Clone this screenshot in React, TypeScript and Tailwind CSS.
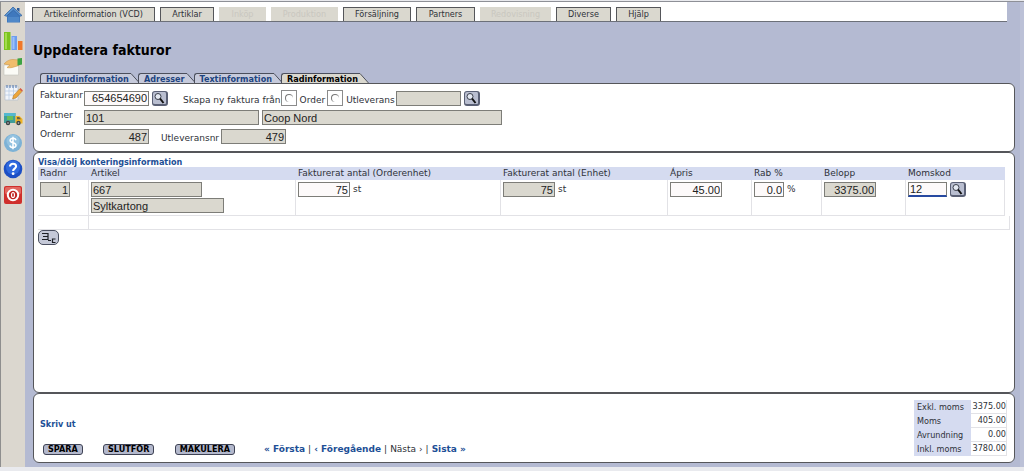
import type { ReactNode } from "react";
import clsx from "clsx";

const menu = [
  { label: "Artikelinformation (VCD)", width: "w-[123px]" },
  { label: "Artiklar", width: "w-[54px]" },
  { label: "Inköp", width: "w-[47px]", disabled: true },
  { label: "Produktion", width: "w-[67px]", disabled: true },
  { label: "Försäljning", width: "w-[68px]" },
  { label: "Partners", width: "w-[59px]" },
  { label: "Redovisning", width: "w-[71px]", disabled: true },
  { label: "Diverse", width: "w-[55px]" },
  { label: "Hjälp", width: "w-[45px]" },
];

const tabs = ["Huvudinformation", "Adresser", "Textinformation", "Radinformation"];

const totals = [
  ["Exkl. moms", "3375.00"],
  ["Moms", "405.00"],
  ["Avrundning", "0.00"],
  ["Inkl. moms", "3780.00"],
];

const condensed = "font-[DejaVu_Sans_Condensed,DejaVu_Sans,sans-serif]";

function SideLink({ label, children }: { label: string; children: ReactNode }) {
  return (
    <a href="#" aria-label={label} className="block">
      <svg viewBox="0 0 20 20" className="size-5">
        {children}
      </svg>
    </a>
  );
}

function Sidebar() {
  return (
    <nav aria-label="Genvägar" className="flex w-[25px] shrink-0 flex-col items-center gap-1 border-l border-[#8e8e8e] bg-[#dbd7cf] pt-[3px]">
      <div className="flex flex-col gap-1.5">
        <SideLink label="Hem">
          <path d="M4 9v8.500h13V9l-6-6z" fill="#3f78bd" />
          <path d="M10 2 1.500 10.500l2 .8L10.500 5l6.500 6.300 2-.8z" fill="#5b93d0" stroke="#2c5d9c" strokeWidth=".7" />
          <path d="M14 3h2.500v4L14 5z" fill="#2c5d9c" />
          <path d="M5 12h11v5H5z" fill="#4f88c8" />
        </SideLink>
        <SideLink label="Statistik">
          <path d="M1 1h6.500v18H1z" fill="#7cc31e" />
          <path d="M2 2h2v16H2z" fill="#a2dc4c" />
          <path d="M8.500 5h5.500v14H8.500z" fill="#6d9df0" />
          <path d="M9.500 6h2v12h-2z" fill="#9dc0fa" />
          <path d="M15 10h4.500v9H15z" fill="#f0782a" />
        </SideLink>
        <SideLink label="Kort">
          <path d="M1 8h14.500v10H1z" fill="#fbfbf6" stroke="#c5c4bd" strokeWidth=".6" />
          <path d="M1 7c3-3.500 6-4.500 9-4.500l6 .5v5.500l-5 1.500c-3 1-6 1-7 .5l3-2.500z" fill="#f0bd6c" stroke="#c9913f" strokeWidth=".5" />
          <path d="M14.500 1.500 19 1v6.500l-4.500 1z" fill="#3da343" />
        </SideLink>
        <SideLink label="Anteckningar">
          <path d="M2 3h13v14H2z" fill="#f2f5fa" stroke="#b6bfcd" strokeWidth=".7" />
          <path d="M2 8h13M2 12h13M6 3v14M10.500 3v14" stroke="#b9cbe4" strokeWidth=".8" />
          <path d="M4 2v3M7 2v3M10 2v3M13 2v3" stroke="#5d7fb0" strokeWidth="1.100" />
          <path d="m9.500 16 1-3.500 6-6.500 2.500 2.500-6 6.500z" fill="#eda63b" stroke="#a5712b" strokeWidth=".5" />
          <path d="m16.500 6 1-1 2.400 2.400-1 1.100z" fill="#d9543f" />
        </SideLink>
        <SideLink label="Leveranser">
          <path d="M1 4h11.500v10H1z" fill="#3f9e9a" />
          <path d="M1 4h11.500v3H1z" fill="#54b8d0" />
          <path d="M4 7h6v4H4z" fill="#68bd5a" />
          <path d="M12.500 7h4l3 3v4.500h-7z" fill="#efb324" />
          <path d="M14 8h2.200l1.800 2.200H14z" fill="#6b6146" />
          <circle cx="5" cy="14" r="2.200" fill="#3c4346" />
          <circle cx="15.500" cy="14" r="2.200" fill="#3c4346" />
          <circle cx="5" cy="14" r=".8" fill="#ccc" />
          <circle cx="15.500" cy="14" r=".8" fill="#ccc" />
        </SideLink>
      </div>
      <div className="flex flex-col gap-1.5">
        <SideLink label="Ekonomi">
          <circle cx="10" cy="10" r="9" fill="#7db2d6" />
          <circle cx="10" cy="8" r="6.500" fill="#93c2e0" />
          <path d="M13 7.200C12.600 5.800 11.500 5.300 10 5.300c-1.800 0-2.900.9-2.900 2.200C7.100 10.600 13 9 13 12.300c0 1.400-1.200 2.300-3 2.300-1.700 0-2.800-.7-3.200-2.100M10 3.700v12.600" fill="none" stroke="#fff" strokeWidth="1.500" />
        </SideLink>
        <SideLink label="Hjälp">
          <circle cx="10" cy="10" r="9.300" fill="#1d4fc4" />
          <circle cx="10" cy="8.500" r="7" fill="#2f69de" />
          <path d="M7 7.500C7 5.700 8.200 4.700 10 4.700s3.100 1 3.100 2.600c0 2.300-3 2.300-3 4.700" fill="none" stroke="#fff" strokeWidth="2.100" />
          <circle cx="10.100" cy="14.700" r="1.400" fill="#fff" />
        </SideLink>
        <SideLink label="Logga ut">
          <rect x="1" y="1" width="18" height="18" rx="2" fill="#cf2f2c" />
          <rect x="2" y="2" width="16" height="7" rx="1.500" fill="#e26860" />
          <circle cx="10" cy="10" r="5.200" fill="#c02724" stroke="#fff" strokeWidth="2" />
          <ellipse cx="10" cy="10" rx="1.500" ry="2.500" fill="none" stroke="#fff" strokeWidth="1.200" />
        </SideLink>
      </div>
    </nav>
  );
}

function SearchButton({ label }: { label: string }) {
  return (
    <button aria-label={label} className="h-[15px] w-4 shrink-0 rounded-[3px] border border-r-2 border-b-2 border-[#5a6075] bg-[#b9bed0]">
      <svg viewBox="0 0 13 12" className="h-3 w-[13px]">
        <circle cx="5" cy="4.500" r="3" fill="#e4e9f2" stroke="#3b404c" strokeWidth="1" />
        <path d="m7 6.500 3.500 4.500" stroke="#111" strokeWidth="2" />
      </svg>
    </button>
  );
}

type FieldProps = {
  label: string;
  value?: string;
  width: string;
  right?: boolean;
  locked?: boolean;
  focused?: boolean;
};

function Field({ label, value = "", width, right, locked, focused }: FieldProps) {
  return (
    <input
      aria-label={label}
      defaultValue={value}
      readOnly={locked}
      className={clsx(
        "block h-[15px] shrink-0 border border-[#7d7d78] px-px font-[Liberation_Sans,sans-serif] text-[11px] leading-[13px] text-[#222] outline-none",
        width,
        right && "text-right",
        locked ? "bg-[#dad8cf]" : "bg-[#fdfafa]",
        focused && "border-b-2 border-b-[#2749a0]"
      )}
    />
  );
}

function RadioBox({ label }: { label: string }) {
  return (
    <label className="flex items-center gap-[3px]">
      <span className="flex size-4 justify-center border border-[#8b8b8b] pt-[3px]">
        <input type="radio" name="source" className="size-2 appearance-none rounded-full border-t border-l border-[#777]" />
      </span>
      <span className="pt-1 leading-3">{label}</span>
    </label>
  );
}

function RowLabel({ children }: { children: ReactNode }) {
  return <span className="w-11 shrink-0 self-start leading-[11px]">{children}</span>;
}

function Tab({ label, active }: { label: string; active: boolean }) {
  return (
    <a href="#" role="tab" aria-selected={active} className={clsx("-ml-0.5 flex h-2.5", active ? "text-black" : "text-[#1d4480]")}>
      <span
        className={clsx(
          "rounded-tl-[3px] border-t border-l border-[#4b4f5c] pl-[5px] text-[9px] leading-2.5 font-bold",
          condensed,
          active ? "bg-[#dad8cf]" : "bg-[#c6cadb]"
        )}
      >
        {label}
      </span>
      <svg viewBox="0 0 11 10" className="h-2.5 w-[11px]">
        <path d="M0 0h2l9 10H0z" fill={active ? "#dad8cf" : "#c6cadb"} />
        <path d="M0 .5h2l8.500 9.500" fill="none" stroke="#4b4f5c" />
      </svg>
    </a>
  );
}

function ActionButton({ children }: { children: ReactNode }) {
  return (
    <button className={clsx("h-[11px] rounded-[3px] border border-[#3e4254] bg-[#b3b8cc] px-1 text-[9px] leading-[9px] font-bold text-black", condensed)}>
      {children}
    </button>
  );
}

export default function App() {
  const link = "font-bold text-[#1d4f96]";
  const head = "px-0.5 text-left font-normal";
  const cell = "border-r border-b border-[#e2e2e6] px-0.5 pt-0.5 align-top";

  return (
    <div className="flex min-h-screen flex-col bg-[#e9eaee] pt-px pb-1 font-[DejaVu_Sans,sans-serif] text-[9px] text-[#2e3138]">
      <div className="flex flex-1 border-t border-[#8e9097]">
        <Sidebar />
        <div className="flex min-w-0 flex-1 flex-col border-r-4 border-[#bcc1d7] bg-[#b4bad2]">
          <nav
            aria-label="Meny"
            className={clsx("mr-[13px] flex h-5 items-end gap-[5px] border-b border-[#6c7079] bg-white pl-[7px]", condensed)}
          >
            {menu.map((item) => (
              <button
                key={item.label}
                disabled={item.disabled}
                className={clsx(
                  "h-3.5 shrink-0 bg-[#dad8cf] leading-[13px]",
                  item.width,
                  item.disabled ? "text-[#c9c7bf]" : "border border-b-0 border-[#55565a]"
                )}
              >
                {item.label}
              </button>
            ))}
          </nav>

          <main className="flex flex-1 flex-col pr-[5px] pb-1 pl-2">
            <h1 className={clsx("mt-5 text-[14px] leading-4 font-bold text-black", condensed)}>Uppdatera fakturor</h1>

            <div role="tablist" className="mt-[15px] flex pl-[9px]">
              {tabs.map((t) => (
                <Tab key={t} label={t} active={t === "Radinformation"} />
              ))}
            </div>

            <section className="flex flex-col gap-1 rounded-md border border-[#55565a] bg-white px-1.5 pt-1.5 pb-[7px]">
              <div className="flex h-4 items-center">
                <RowLabel>Fakturanr</RowLabel>
                <Field label="Fakturanr" value="654654690" width="w-[65px]" right />
                <div className="ml-[3px] flex">
                  <SearchButton label="Sök faktura" />
                </div>
                <span className="ml-[15px] pt-1 leading-3">Skapa ny faktura från</span>
                <div className="flex gap-0.5">
                  <RadioBox label="Order" />
                  <RadioBox label="Utleverans" />
                </div>
                <div className="ml-px flex gap-[3px]">
                  <Field label="Källa" width="w-[65px]" locked />
                  <SearchButton label="Sök källa" />
                </div>
              </div>
              <div className="flex">
                <RowLabel>Partner</RowLabel>
                <div className="flex gap-[3px]">
                  <Field label="Partner" value="101" width="w-[175px]" locked />
                  <Field label="Partnernamn" value="Coop Nord" width="w-60" locked />
                </div>
              </div>
              <div className="flex">
                <RowLabel>Ordernr</RowLabel>
                <Field label="Ordernr" value="487" width="w-[65px]" right locked />
                <span className="mr-0.5 ml-3 pt-[3px] leading-3">Utleveransnr</span>
                <Field label="Utleveransnr" value="479" width="w-[65px]" right locked />
              </div>
            </section>

            <section className="flex-1 rounded-md border border-[#55565a] bg-white px-1 pt-1">
              <a href="#" className={clsx("block leading-[10px]", link, condensed)}>
                Visa/dölj konteringsinformation
              </a>
              <table className="w-full table-fixed border-separate border-spacing-0">
                <colgroup>
                  <col className="w-[51px]" />
                  <col />
                  <col className="w-[205px]" />
                  <col className="w-[167px]" />
                  <col className="w-[84px]" />
                  <col className="w-[70px]" />
                  <col className="w-[84px]" />
                  <col className="w-[99px]" />
                  <col className="w-[5px]" />
                </colgroup>
                <thead>
                  <tr className="h-[13px] leading-[13px] [&>th]:bg-[#d5dbf0]">
                    <th className={head}>Radnr</th>
                    <th className={head}>Artikel</th>
                    <th className={head}>Fakturerat antal (Orderenhet)</th>
                    <th className={head}>Fakturerat antal (Enhet)</th>
                    <th className={head}>Ápris</th>
                    <th className={head}>Rab %</th>
                    <th className={head}>Belopp</th>
                    <th className={head}>Momskod</th>
                  </tr>
                </thead>
                <tbody>
                  <tr className="h-9">
                    <td className={cell}>
                      <Field label="Radnr" value="1" width="w-[30px]" right locked />
                    </td>
                    <td className={cell}>
                      <div className="flex flex-col gap-px">
                        <Field label="Artikel" value="667" width="w-[111px]" locked />
                        <Field label="Artikelnamn" value="Syltkartong" width="w-[133px]" locked />
                      </div>
                    </td>
                    <td className={cell}>
                      <div className="flex items-center gap-[3px]">
                        <Field label="Antal orderenhet" value="75" width="w-[52px]" right />
                        st
                      </div>
                    </td>
                    <td className={cell}>
                      <div className="flex items-center gap-[3px]">
                        <Field label="Antal enhet" value="75" width="w-[52px]" right locked />
                        st
                      </div>
                    </td>
                    <td className={cell}>
                      <Field label="Ápris" value="45.00" width="w-[52px]" right />
                    </td>
                    <td className={cell}>
                      <div className="flex items-center gap-[3px]">
                        <Field label="Rabatt" value="0.0" width="w-[30px]" right />%
                      </div>
                    </td>
                    <td className={cell}>
                      <Field label="Belopp" value="3375.00" width="w-[52px]" right locked />
                    </td>
                    <td className={cell}>
                      <div className="flex gap-[3px]">
                        <Field label="Momskod" value="12" width="w-[39px]" focused />
                        <SearchButton label="Sök momskod" />
                      </div>
                    </td>
                  </tr>
                  <tr className="h-3.5">
                    <td className="border-r border-b border-[#e2e2e6]" />
                    <td colSpan={8} className="border-r border-b border-[#e2e2e6]" />
                  </tr>
                </tbody>
              </table>
              <button aria-label="Kopiera rad" className="block h-[15px] w-[21px] rounded-[5px] border border-[#4a4f60] bg-[#c5c9d8]">
                <svg viewBox="0 0 19 13" className="h-[13px] w-[19px]">
                  <path d="M3 2.500h6M4 5.500h5M3 8.500h6M9 2v7M9 9.500h3M16.500 8h-3v3.500h3" fill="none" stroke="#1d2026" strokeWidth="1.200" />
                </svg>
              </button>
            </section>

            <section className="flex justify-between rounded-md border border-[#55565a] bg-white pt-1.5 pr-[7px] pb-1.5 pl-1.5">
              <div className="flex flex-col justify-between pt-[18px]">
                <a href="#" className={clsx("leading-3", link, condensed)}>
                  Skriv ut
                </a>
                <div className="flex items-center pl-[3px]">
                  <div className="flex w-[221px] items-center justify-between pr-[29px]">
                    <ActionButton>SPARA</ActionButton>
                    <ActionButton>SLUTFÖR</ActionButton>
                    <ActionButton>MAKULERA</ActionButton>
                  </div>
                  <div className="flex gap-[3px] whitespace-nowrap">
                    <a href="#" className={link}>« Första</a>
                    <span>|</span>
                    <a href="#" className={link}>‹ Föregående</a>
                    <span>|</span>
                    <span>Nästa ›</span>
                    <span>|</span>
                    <a href="#" className={link}>Sista »</a>
                  </div>
                </div>
              </div>
              <table className={clsx("w-[93px] border-separate border-spacing-0", condensed)}>
                <tbody>
                  {totals.map(([label, value]) => (
                    <tr key={label} className="leading-[13px]">
                      <th className="bg-[#d5dbf0] pr-1 pl-[3px] text-left font-normal whitespace-nowrap">{label}</th>
                      <td className="border-r border-b border-[#e2e2e6] text-right">{value}</td>
                    </tr>
                  ))}
                </tbody>
              </table>
            </section>
          </main>
        </div>
      </div>
    </div>
  );
}
